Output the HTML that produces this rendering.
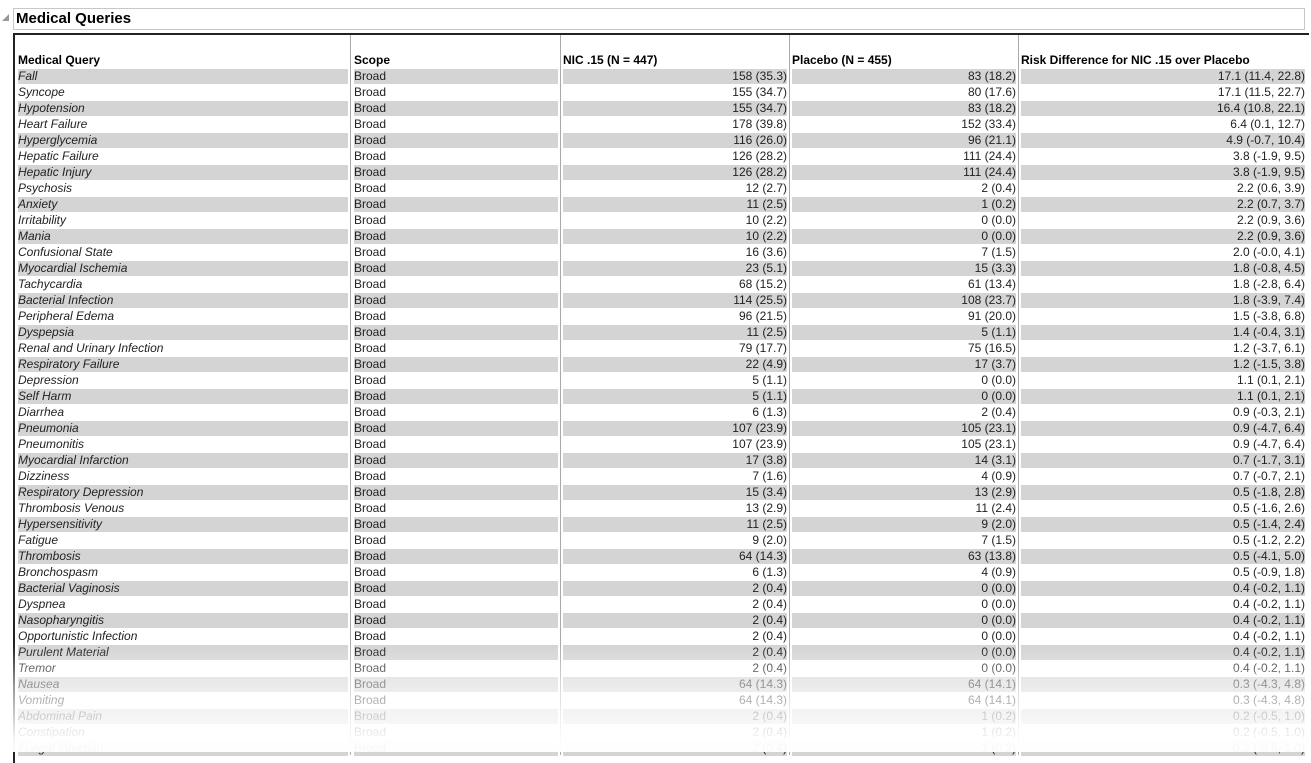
<!DOCTYPE html><html><head><meta charset="utf-8"><style>
body{margin:0;width:1311px;height:752px;overflow:hidden;background:#fff;font-family:"Liberation Sans",sans-serif;font-size:12px;color:#222;position:relative}
.title{position:absolute;left:13px;top:8px;width:1292px;height:22px;border:1px solid #c8c8c8;box-sizing:border-box}
.title span{position:absolute;left:2px;top:1px;font-weight:bold;font-size:15px;color:#000}
.tri{position:absolute;left:2px;top:14px;width:0;height:0;border-left:7px solid transparent;border-bottom:7px solid #999}
.tbl{position:absolute;left:13px;top:33px;width:1296px;height:730px;border-top:2px solid #222;border-left:2px solid #222;box-sizing:border-box}
.vl{position:absolute;top:35px;height:720px;width:1px;background:#aaa}
.row{position:absolute;left:0;height:16px;line-height:16px;width:1311px}
.c{position:absolute;top:0;height:15px;line-height:15px;white-space:nowrap}
.g .c{background:#d4d4d4}
.c1{left:18px;width:330px;font-style:italic}
.c2{left:354px;width:204px}
.c3{left:563px;width:224px;text-align:right}
.c4{left:792px;width:224px;text-align:right}
.c5{left:1021px;width:284px;text-align:right}
.h .c{font-weight:bold;font-style:normal;color:#000;background:none}
.fade{position:absolute;left:0;top:645px;width:1311px;height:107px;background:linear-gradient(rgba(255,255,255,0),rgba(255,255,255,.5) 35%,rgba(255,255,255,.97) 90%)}
#rows{position:absolute;left:0;top:1px;width:1311px}
</style></head><body>
<div class="tri"></div>
<div class="title"><span>Medical Queries</span></div>
<div class="tbl"></div>
<div class="vl" style="left:350px"></div>
<div class="vl" style="left:560px"></div>
<div class="vl" style="left:789px"></div>
<div class="vl" style="left:1018px"></div>
<div class="row h" style="top:53px"><div class="c c1">Medical Query</div><div class="c c2">Scope</div><div class="c c3" style="text-align:left">NIC .15 (N = 447)</div><div class="c c4" style="text-align:left">Placebo (N = 455)</div><div class="c c5" style="text-align:left">Risk Difference for NIC .15 over Placebo</div></div>
<div id="rows">
<div class="row g" style="top:68px"><div class="c c1">Fall</div><div class="c c2">Broad</div><div class="c c3">158 (35.3)</div><div class="c c4">83 (18.2)</div><div class="c c5">17.1 (11.4, 22.8)</div></div>
<div class="row" style="top:84px"><div class="c c1">Syncope</div><div class="c c2">Broad</div><div class="c c3">155 (34.7)</div><div class="c c4">80 (17.6)</div><div class="c c5">17.1 (11.5, 22.7)</div></div>
<div class="row g" style="top:100px"><div class="c c1">Hypotension</div><div class="c c2">Broad</div><div class="c c3">155 (34.7)</div><div class="c c4">83 (18.2)</div><div class="c c5">16.4 (10.8, 22.1)</div></div>
<div class="row" style="top:116px"><div class="c c1">Heart Failure</div><div class="c c2">Broad</div><div class="c c3">178 (39.8)</div><div class="c c4">152 (33.4)</div><div class="c c5">6.4 (0.1, 12.7)</div></div>
<div class="row g" style="top:132px"><div class="c c1">Hyperglycemia</div><div class="c c2">Broad</div><div class="c c3">116 (26.0)</div><div class="c c4">96 (21.1)</div><div class="c c5">4.9 (-0.7, 10.4)</div></div>
<div class="row" style="top:148px"><div class="c c1">Hepatic Failure</div><div class="c c2">Broad</div><div class="c c3">126 (28.2)</div><div class="c c4">111 (24.4)</div><div class="c c5">3.8 (-1.9, 9.5)</div></div>
<div class="row g" style="top:164px"><div class="c c1">Hepatic Injury</div><div class="c c2">Broad</div><div class="c c3">126 (28.2)</div><div class="c c4">111 (24.4)</div><div class="c c5">3.8 (-1.9, 9.5)</div></div>
<div class="row" style="top:180px"><div class="c c1">Psychosis</div><div class="c c2">Broad</div><div class="c c3">12 (2.7)</div><div class="c c4">2 (0.4)</div><div class="c c5">2.2 (0.6, 3.9)</div></div>
<div class="row g" style="top:196px"><div class="c c1">Anxiety</div><div class="c c2">Broad</div><div class="c c3">11 (2.5)</div><div class="c c4">1 (0.2)</div><div class="c c5">2.2 (0.7, 3.7)</div></div>
<div class="row" style="top:212px"><div class="c c1">Irritability</div><div class="c c2">Broad</div><div class="c c3">10 (2.2)</div><div class="c c4">0 (0.0)</div><div class="c c5">2.2 (0.9, 3.6)</div></div>
<div class="row g" style="top:228px"><div class="c c1">Mania</div><div class="c c2">Broad</div><div class="c c3">10 (2.2)</div><div class="c c4">0 (0.0)</div><div class="c c5">2.2 (0.9, 3.6)</div></div>
<div class="row" style="top:244px"><div class="c c1">Confusional State</div><div class="c c2">Broad</div><div class="c c3">16 (3.6)</div><div class="c c4">7 (1.5)</div><div class="c c5">2.0 (-0.0, 4.1)</div></div>
<div class="row g" style="top:260px"><div class="c c1">Myocardial Ischemia</div><div class="c c2">Broad</div><div class="c c3">23 (5.1)</div><div class="c c4">15 (3.3)</div><div class="c c5">1.8 (-0.8, 4.5)</div></div>
<div class="row" style="top:276px"><div class="c c1">Tachycardia</div><div class="c c2">Broad</div><div class="c c3">68 (15.2)</div><div class="c c4">61 (13.4)</div><div class="c c5">1.8 (-2.8, 6.4)</div></div>
<div class="row g" style="top:292px"><div class="c c1">Bacterial Infection</div><div class="c c2">Broad</div><div class="c c3">114 (25.5)</div><div class="c c4">108 (23.7)</div><div class="c c5">1.8 (-3.9, 7.4)</div></div>
<div class="row" style="top:308px"><div class="c c1">Peripheral Edema</div><div class="c c2">Broad</div><div class="c c3">96 (21.5)</div><div class="c c4">91 (20.0)</div><div class="c c5">1.5 (-3.8, 6.8)</div></div>
<div class="row g" style="top:324px"><div class="c c1">Dyspepsia</div><div class="c c2">Broad</div><div class="c c3">11 (2.5)</div><div class="c c4">5 (1.1)</div><div class="c c5">1.4 (-0.4, 3.1)</div></div>
<div class="row" style="top:340px"><div class="c c1">Renal and Urinary Infection</div><div class="c c2">Broad</div><div class="c c3">79 (17.7)</div><div class="c c4">75 (16.5)</div><div class="c c5">1.2 (-3.7, 6.1)</div></div>
<div class="row g" style="top:356px"><div class="c c1">Respiratory Failure</div><div class="c c2">Broad</div><div class="c c3">22 (4.9)</div><div class="c c4">17 (3.7)</div><div class="c c5">1.2 (-1.5, 3.8)</div></div>
<div class="row" style="top:372px"><div class="c c1">Depression</div><div class="c c2">Broad</div><div class="c c3">5 (1.1)</div><div class="c c4">0 (0.0)</div><div class="c c5">1.1 (0.1, 2.1)</div></div>
<div class="row g" style="top:388px"><div class="c c1">Self Harm</div><div class="c c2">Broad</div><div class="c c3">5 (1.1)</div><div class="c c4">0 (0.0)</div><div class="c c5">1.1 (0.1, 2.1)</div></div>
<div class="row" style="top:404px"><div class="c c1">Diarrhea</div><div class="c c2">Broad</div><div class="c c3">6 (1.3)</div><div class="c c4">2 (0.4)</div><div class="c c5">0.9 (-0.3, 2.1)</div></div>
<div class="row g" style="top:420px"><div class="c c1">Pneumonia</div><div class="c c2">Broad</div><div class="c c3">107 (23.9)</div><div class="c c4">105 (23.1)</div><div class="c c5">0.9 (-4.7, 6.4)</div></div>
<div class="row" style="top:436px"><div class="c c1">Pneumonitis</div><div class="c c2">Broad</div><div class="c c3">107 (23.9)</div><div class="c c4">105 (23.1)</div><div class="c c5">0.9 (-4.7, 6.4)</div></div>
<div class="row g" style="top:452px"><div class="c c1">Myocardial Infarction</div><div class="c c2">Broad</div><div class="c c3">17 (3.8)</div><div class="c c4">14 (3.1)</div><div class="c c5">0.7 (-1.7, 3.1)</div></div>
<div class="row" style="top:468px"><div class="c c1">Dizziness</div><div class="c c2">Broad</div><div class="c c3">7 (1.6)</div><div class="c c4">4 (0.9)</div><div class="c c5">0.7 (-0.7, 2.1)</div></div>
<div class="row g" style="top:484px"><div class="c c1">Respiratory Depression</div><div class="c c2">Broad</div><div class="c c3">15 (3.4)</div><div class="c c4">13 (2.9)</div><div class="c c5">0.5 (-1.8, 2.8)</div></div>
<div class="row" style="top:500px"><div class="c c1">Thrombosis Venous</div><div class="c c2">Broad</div><div class="c c3">13 (2.9)</div><div class="c c4">11 (2.4)</div><div class="c c5">0.5 (-1.6, 2.6)</div></div>
<div class="row g" style="top:516px"><div class="c c1">Hypersensitivity</div><div class="c c2">Broad</div><div class="c c3">11 (2.5)</div><div class="c c4">9 (2.0)</div><div class="c c5">0.5 (-1.4, 2.4)</div></div>
<div class="row" style="top:532px"><div class="c c1">Fatigue</div><div class="c c2">Broad</div><div class="c c3">9 (2.0)</div><div class="c c4">7 (1.5)</div><div class="c c5">0.5 (-1.2, 2.2)</div></div>
<div class="row g" style="top:548px"><div class="c c1">Thrombosis</div><div class="c c2">Broad</div><div class="c c3">64 (14.3)</div><div class="c c4">63 (13.8)</div><div class="c c5">0.5 (-4.1, 5.0)</div></div>
<div class="row" style="top:564px"><div class="c c1">Bronchospasm</div><div class="c c2">Broad</div><div class="c c3">6 (1.3)</div><div class="c c4">4 (0.9)</div><div class="c c5">0.5 (-0.9, 1.8)</div></div>
<div class="row g" style="top:580px"><div class="c c1">Bacterial Vaginosis</div><div class="c c2">Broad</div><div class="c c3">2 (0.4)</div><div class="c c4">0 (0.0)</div><div class="c c5">0.4 (-0.2, 1.1)</div></div>
<div class="row" style="top:596px"><div class="c c1">Dyspnea</div><div class="c c2">Broad</div><div class="c c3">2 (0.4)</div><div class="c c4">0 (0.0)</div><div class="c c5">0.4 (-0.2, 1.1)</div></div>
<div class="row g" style="top:612px"><div class="c c1">Nasopharyngitis</div><div class="c c2">Broad</div><div class="c c3">2 (0.4)</div><div class="c c4">0 (0.0)</div><div class="c c5">0.4 (-0.2, 1.1)</div></div>
<div class="row" style="top:628px"><div class="c c1">Opportunistic Infection</div><div class="c c2">Broad</div><div class="c c3">2 (0.4)</div><div class="c c4">0 (0.0)</div><div class="c c5">0.4 (-0.2, 1.1)</div></div>
<div class="row g" style="top:644px"><div class="c c1">Purulent Material</div><div class="c c2">Broad</div><div class="c c3">2 (0.4)</div><div class="c c4">0 (0.0)</div><div class="c c5">0.4 (-0.2, 1.1)</div></div>
<div class="row" style="top:660px"><div class="c c1">Tremor</div><div class="c c2">Broad</div><div class="c c3">2 (0.4)</div><div class="c c4">0 (0.0)</div><div class="c c5">0.4 (-0.2, 1.1)</div></div>
<div class="row g" style="top:676px"><div class="c c1">Nausea</div><div class="c c2">Broad</div><div class="c c3">64 (14.3)</div><div class="c c4">64 (14.1)</div><div class="c c5">0.3 (-4.3, 4.8)</div></div>
<div class="row" style="top:692px"><div class="c c1">Vomiting</div><div class="c c2">Broad</div><div class="c c3">64 (14.3)</div><div class="c c4">64 (14.1)</div><div class="c c5">0.3 (-4.3, 4.8)</div></div>
<div class="row g" style="top:708px"><div class="c c1">Abdominal Pain</div><div class="c c2">Broad</div><div class="c c3">2 (0.4)</div><div class="c c4">1 (0.2)</div><div class="c c5">0.2 (-0.5, 1.0)</div></div>
<div class="row" style="top:724px"><div class="c c1">Constipation</div><div class="c c2">Broad</div><div class="c c3">2 (0.4)</div><div class="c c4">1 (0.2)</div><div class="c c5">0.2 (-0.5, 1.0)</div></div>
<div class="row g" style="top:740px"><div class="c c1">Fungal Infection</div><div class="c c2">Broad</div><div class="c c3">2 (0.4)</div><div class="c c4">1 (0.2)</div><div class="c c5">0.2 (-0.5, 1.0)</div></div>
</div>
<div class="fade"></div>
</body></html>
